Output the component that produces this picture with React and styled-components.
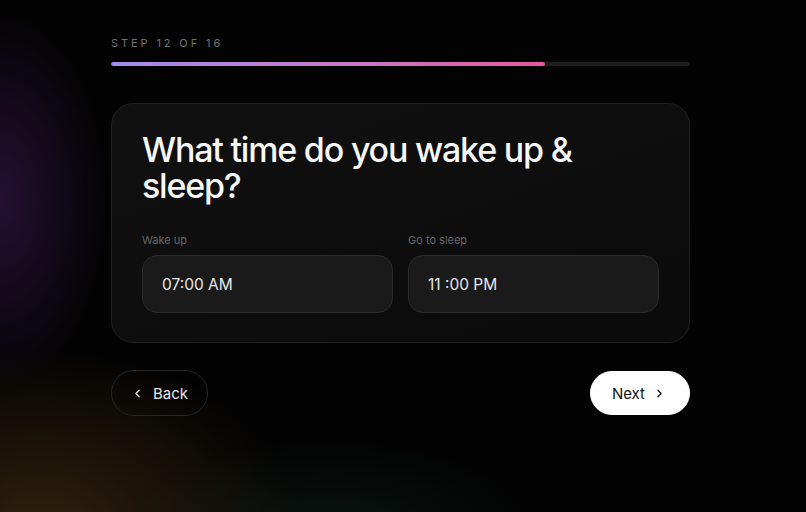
import styled, { createGlobalStyle } from 'styled-components'

const GlobalStyle = createGlobalStyle`
  html, body {
    margin: 0;
    padding: 0;
    background: #030303;
  }
  * {
    box-sizing: border-box;
  }
`

const ChevronLeft = () => (
  <svg width="13" height="13" viewBox="0 0 24 24" fill="none" stroke="currentColor" strokeWidth="2.4" strokeLinecap="round" strokeLinejoin="round">
    <path d="M15 18l-6-6 6-6" />
  </svg>
)

const ChevronRight = () => (
  <svg width="13" height="13" viewBox="0 0 24 24" fill="none" stroke="currentColor" strokeWidth="2.4" strokeLinecap="round" strokeLinejoin="round">
    <path d="M9 18l6-6-6-6" />
  </svg>
)

function App() {
  const step = 12
  const total = 16

  return (
    <Page>
      <GlobalStyle />
      <Wrapper>
        <StepLabel>
          Step {step} of {total}
        </StepLabel>
        <Track>
          <Fill style={{ width: `${(step / total) * 100}%` }} />
        </Track>

        <Card>
          <Title>What time do you wake up &amp; sleep?</Title>
          <Fields>
            <Field>
              <Label>Wake up</Label>
              <TimeBox>07:00 AM</TimeBox>
            </Field>
            <Field>
              <Label>Go to sleep</Label>
              <TimeBox>11 :00 PM</TimeBox>
            </Field>
          </Fields>
        </Card>

        <Actions>
          <Button>
            <ChevronLeft />
            Back
          </Button>
          <Button $primary>
            Next
            <ChevronRight />
          </Button>
        </Actions>
      </Wrapper>
    </Page>
  )
}

export default App

/* styles */

const Page = styled.main`
  width: 806px;
  height: 512px;
  overflow: hidden;
  font-family: Inter, 'Noto Sans', sans-serif;
  background:
    radial-gradient(ellipse 110px 190px at 0px 200px, rgba(70, 30, 100, 0.5), transparent),
    radial-gradient(ellipse 260px 180px at 40px 530px, rgba(85, 58, 20, 0.55), transparent),
    radial-gradient(ellipse 200px 90px at 330px 530px, rgba(20, 50, 40, 0.35), transparent),
    #030303;
  padding: 37px 0 0 111px;
`

const Wrapper = styled.div`
  width: 579px;
  display: flex;
  flex-direction: column;
`

const StepLabel = styled.div`
  font-size: 11px;
  letter-spacing: 2.9px;
  text-transform: uppercase;
  color: #727272;
  line-height: 13px;
`

const Track = styled.div`
  margin-top: 12px;
  height: 4px;
  border-radius: 2px;
  background: #1e1e1e;
  overflow: hidden;
`

const Fill = styled.div`
  height: 100%;
  border-radius: 2px;
  background: linear-gradient(90deg, #a08cf0, #c47cc8 50%, #e6589a);
`

const Card = styled.section`
  margin-top: 37px;
  border: 1px solid #1f1f1f;
  border-radius: 22px;
  background: linear-gradient(160deg, #111111, #0a0a0a);
  padding: 28px 30px 29px 30px;
`

const Title = styled.h1`
  margin: 0;
  width: 470px;
  font-size: 34px;
  line-height: 36px;
  font-weight: 500;
  letter-spacing: -1.2px;
  color: #f7f7f7;
`

const Fields = styled.div`
  margin-top: 29px;
  display: grid;
  grid-template-columns: 1fr 1fr;
  gap: 15px;
`

const Field = styled.div`
  display: flex;
  flex-direction: column;
`

const Label = styled.span`
  font-size: 11px;
  color: #666;
  line-height: 14px;
  margin-bottom: 8px;
`

const TimeBox = styled.div`
  height: 58px;
  display: flex;
  align-items: center;
  padding-left: 19px;
  border: 1px solid #2a2a2a;
  border-radius: 15px;
  background: #1a1a1a;
  color: #e8e8e8;
  font-size: 15.5px;
`

const Actions = styled.div`
  margin-top: 27px;
  display: flex;
  justify-content: space-between;
  align-items: center;
`

const Button = styled.button`
  height: ${({ $primary }) => ($primary ? '44px' : '46px')};
  padding: ${({ $primary }) => ($primary ? '0 23px 0 21px' : '0 19px 0 19px')};
  display: flex;
  align-items: center;
  gap: ${({ $primary }) => ($primary ? '8px' : '9px')};
  border-radius: 999px;
  font-family: Inter, 'Noto Sans', sans-serif;
  font-size: 15px;
  font-weight: 400;
  cursor: pointer;
  border: 1px solid ${({ $primary }) => ($primary ? '#ffffff' : '#262626')};
  background: ${({ $primary }) => ($primary ? '#ffffff' : 'transparent')};
  color: ${({ $primary }) => ($primary ? '#111111' : '#e6e6e6')};
`
